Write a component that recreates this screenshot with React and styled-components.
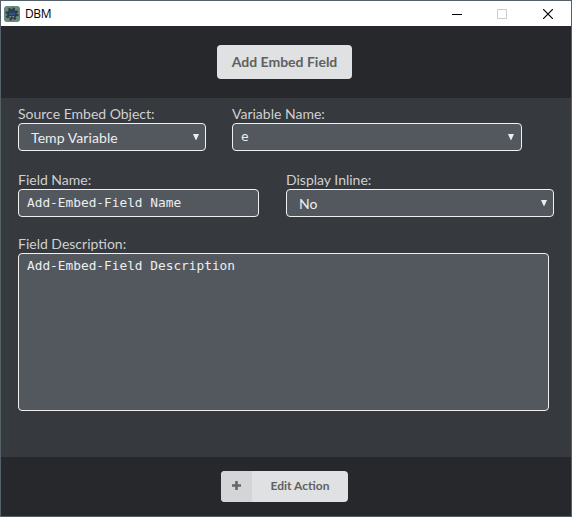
import React from "react";
import styled, { createGlobalStyle, css } from "styled-components";

const GlobalStyle = createGlobalStyle`
  *, *::before, *::after { box-sizing: border-box; }
  body { margin: 0; background: #36393e; font-family: Lato, sans-serif; }
`;

const Window = styled.div`
  width: 572px;
  height: 517px;
  display: flex;
  flex-direction: column;
  overflow: hidden;
  border: 1px solid #566068;
  background: #36393e;
`;

const TitleBar = styled.header`
  flex: 0 0 25px;
  display: flex;
  align-items: center;
  padding-left: 3px;
  background: #fff;
`;

const Title = styled.span`
  flex: 1;
  padding-left: 5px;
  color: #000;
  font: 12px/24px "Open Sans", sans-serif;
  letter-spacing: -0.35px;
`;

const WindowButton = styled.button`
  width: ${(p) => p.$width || 45}px;
  height: 25px;
  padding: 0 18px 0 ${(p) => (p.$width ? 18 : 17)}px;
  border: 0;
  background: none;
  color: ${(p) => (p.disabled ? "#ccc" : "#000")};
  svg { display: block; }
`;

const Bar = styled.section`
  flex: 0 0 ${(p) => p.$height}px;
  display: flex;
  justify-content: center;
  align-items: flex-start;
  padding-top: ${(p) => p.$top}px;
  background: #26282b;
`;

const Heading = styled.h1`
  width: 135px;
  height: 34px;
  margin: 0 0 0 -3px;
  border-radius: 4px;
  background: #e0e1e2;
  color: #5f6061;
  font: bold 14px/34px Lato, sans-serif;
  text-align: center;
`;

const ActionButton = styled.button`
  display: flex;
  width: 127px;
  height: 31px;
  margin-left: -3px;
  padding: 0;
  overflow: hidden;
  border: 0;
  border-radius: 4px;
  background: #e0e1e2;
  color: #5f6061;
  font: bold 12px/30px Lato, sans-serif;
`;

const ActionIcon = styled.span`
  display: grid;
  place-items: center;
  width: 31px;
  height: 31px;
  padding-bottom: 2px;
  background: #d4d5d6;
`;

const ActionLabel = styled.span`
  flex: 1;
  text-align: center;
`;

const Form = styled.form`
  flex: 1;
  padding: 7px 0 0 17px;
`;

const Row = styled.div`
  display: flex;
  gap: ${(p) => p.$gap}px;
  height: ${(p) => p.$height}px;
`;

const Field = styled.label`
  display: block;
  width: ${(p) => p.$width}px;
`;

const FieldLabel = styled.span`
  display: block;
  height: 18px;
  color: #cfd0d1;
  font-size: 14px;
  line-height: 18px;
  white-space: nowrap;
`;

const mono = css`
  padding: 0 8px 2px;
  font: 12.8px/16px "DejaVu Sans Mono", monospace;
`;

const control = css`
  display: block;
  width: 100%;
  height: 28px;
  margin: 0;
  border: 1px solid #f0f0f0;
  border-radius: 4px;
  outline: 0;
  background: #53585f;
  color: #eceef0;
`;

const Input = styled.input`
  ${control}
  ${mono}
`;

const Select = styled.select`
  ${control}
  appearance: none;
  padding: 2px 12px 0;
  font: 14px/18px Lato, sans-serif;
  letter-spacing: 0.08px;
`;

const TextArea = styled.textarea`
  ${control}
  ${mono}
  height: 158px;
  padding-top: 4px;
  resize: none;
`;

const Dropdown = styled.div`
  position: relative;
`;

const Arrow = styled.svg`
  position: absolute;
  top: 11px;
  right: ${(p) => p.$right}px;
  pointer-events: none;
`;

function AppIcon() {
  return (
    <svg width="16" height="16" viewBox="0 0 16 16">
      <rect width="16" height="16" rx="3" fill="#668a80" />
      <circle cx="8" cy="8" r="5.6" fill="none" stroke="#343941" strokeWidth="2" strokeDasharray="2.2 2.2" />
      <circle cx="8" cy="8" r="5" fill="#353a43" />
      <rect x="5" y="5.8" width="6" height="3" rx=".8" fill="#285b9c" />
      <path d="M5 6h6v1H5z" fill="#203d68" />
      <path d="M5.5 10h1.7v1.3H5.5zM8.5 10h1.7v1.3H8.5z" fill="#8b9ba5" />
    </svg>
  );
}

function DropArrow({ right = 7 }) {
  return (
    <Arrow $right={right} width="6" height="6" viewBox="0 0 6 6">
      <path d="M0 0h6L3.3 6h-.6z" fill="#eceeef" />
    </Arrow>
  );
}

export default function App() {
  return (
    <>
      <GlobalStyle />
      <Window>
        <TitleBar>
          <AppIcon />
          <Title>DBM</Title>
          <WindowButton aria-label="Minimize">
            <svg width="10" height="10"><path d="M0 5.5h10" stroke="currentColor" /></svg>
          </WindowButton>
          <WindowButton aria-label="Maximize" disabled>
            <svg width="10" height="10"><path d="M.5.5h9v9h-9z" fill="none" stroke="currentColor" /></svg>
          </WindowButton>
          <WindowButton aria-label="Close" $width={46}>
            <svg width="10" height="10"><path d="M0 0l10 10M10 0L0 10" stroke="currentColor" strokeWidth="1.2" /></svg>
          </WindowButton>
        </TitleBar>
        <Bar $height={72} $top={19}>
          <Heading>Add Embed Field</Heading>
        </Bar>
        <Form>
          <Row $height={66} $gap={26}>
            <Field $width={188}>
              <FieldLabel>Source Embed Object:</FieldLabel>
              <Dropdown>
                <Select defaultValue="temp"><option value="temp">Temp Variable</option></Select>
                <DropArrow />
              </Dropdown>
            </Field>
            <Field $width={290}>
              <FieldLabel>Variable Name:</FieldLabel>
              <Dropdown>
                <Input defaultValue="e" />
                <DropArrow right={8} />
              </Dropdown>
            </Field>
          </Row>
          <Row $height={64} $gap={27}>
            <Field $width={241}>
              <FieldLabel>Field Name:</FieldLabel>
              <Input defaultValue="Add-Embed-Field Name" />
            </Field>
            <Field $width={268}>
              <FieldLabel>Display Inline:</FieldLabel>
              <Dropdown>
                <Select defaultValue="no"><option value="no">No</option></Select>
                <DropArrow />
              </Dropdown>
            </Field>
          </Row>
          <Field $width={531}>
            <FieldLabel>Field Description:</FieldLabel>
            <TextArea spellCheck={false} defaultValue="Add-Embed-Field Description" />
          </Field>
        </Form>
        <Bar $height={59} $top={14}>
          <ActionButton type="button">
            <ActionIcon>
              <svg width="9" height="9"><path d="M4.5 0v9M0 4.5h9" stroke="#656667" strokeWidth="2.6" /></svg>
            </ActionIcon>
            <ActionLabel>Edit Action</ActionLabel>
          </ActionButton>
        </Bar>
      </Window>
    </>
  );
}
